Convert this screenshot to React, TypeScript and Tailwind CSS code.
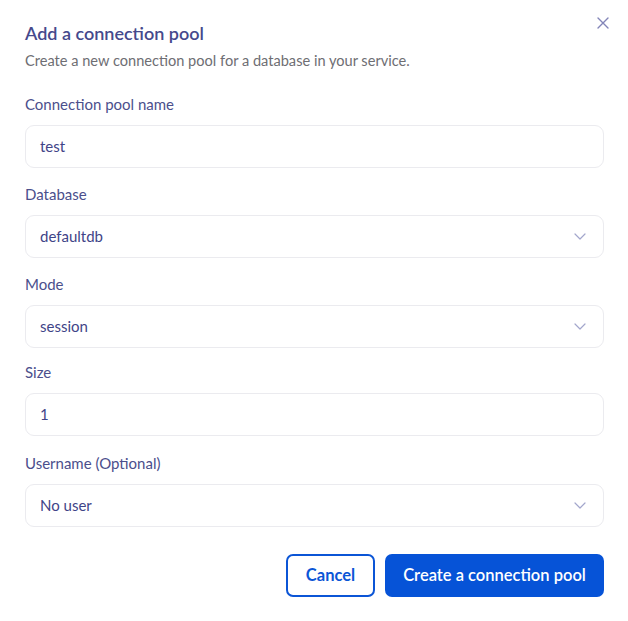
import React from 'react';

const font = { fontFamily: 'Lato, "Open Sans", sans-serif' };

function Chevron() {
  return (
    <svg width="12" height="7" viewBox="0 0 12 7" fill="none" className="shrink-0">
      <path d="M1 1l5 5 5-5" stroke="#a3a6cc" strokeWidth="1.2" strokeLinecap="round" strokeLinejoin="round" />
    </svg>
  );
}

function Field({ label, value, select, className = '' }: { label: string; value: string; select?: boolean; className?: string }) {
  return (
    <div className={`flex flex-col ${className}`}>
      <label className="text-[15px] leading-5 text-[#4b4f8c]">{label}</label>
      <div className="mt-[11px] h-[43px] rounded-[9px] border border-[#ebebef] bg-white flex items-center justify-between pl-[14px] pr-[17px]">
        <span className="text-[15px] text-[#3f4488]">{value}</span>
        {select && <Chevron />}
      </div>
    </div>
  );
}

export default function App() {
  return (
    <div className="w-[628px] h-[621px] bg-white rounded-[6px] relative" style={font}>
      <button className="absolute right-[19px] top-[17px] w-[12px] h-[12px] flex items-center justify-center">
        <svg width="12" height="12" viewBox="0 0 12 12" fill="none">
          <path d="M1 1l10 10M11 1L1 11" stroke="#8385b8" strokeWidth="1.4" strokeLinecap="round" />
        </svg>
      </button>
      <div className="pl-[25px] pr-[24px] pt-[21px] flex flex-col">
        <h2 className="text-[18px] leading-6 font-semibold text-[#45498c]">Add a connection pool</h2>
        <p className="mt-[6px] text-[14.6px] leading-5 text-[#6e6e73]">Create a new connection pool for a database in your service.</p>
        <Field className="mt-[23px]" label="Connection pool name" value="test" />
        <Field className="mt-[16px]" label="Database" value="defaultdb" select />
        <Field className="mt-[16px]" label="Mode" value="session" select />
        <Field className="mt-[14px]" label="Size" value="1" />
        <Field className="mt-[17px]" label="Username (Optional)" value="No user" select />
        <div className="mt-[27px] flex justify-end gap-[10px]">
          <button className="h-[43px] w-[89px] rounded-[7px] border-2 border-[#0b55d6] text-[#0b55d6] text-[16.5px] font-bold bg-white">Cancel</button>
          <button className="h-[43px] w-[219px] rounded-[7px] bg-[#0653d7] text-white text-[16.5px] font-semibold">Create a connection pool</button>
        </div>
      </div>
    </div>
  );
}
